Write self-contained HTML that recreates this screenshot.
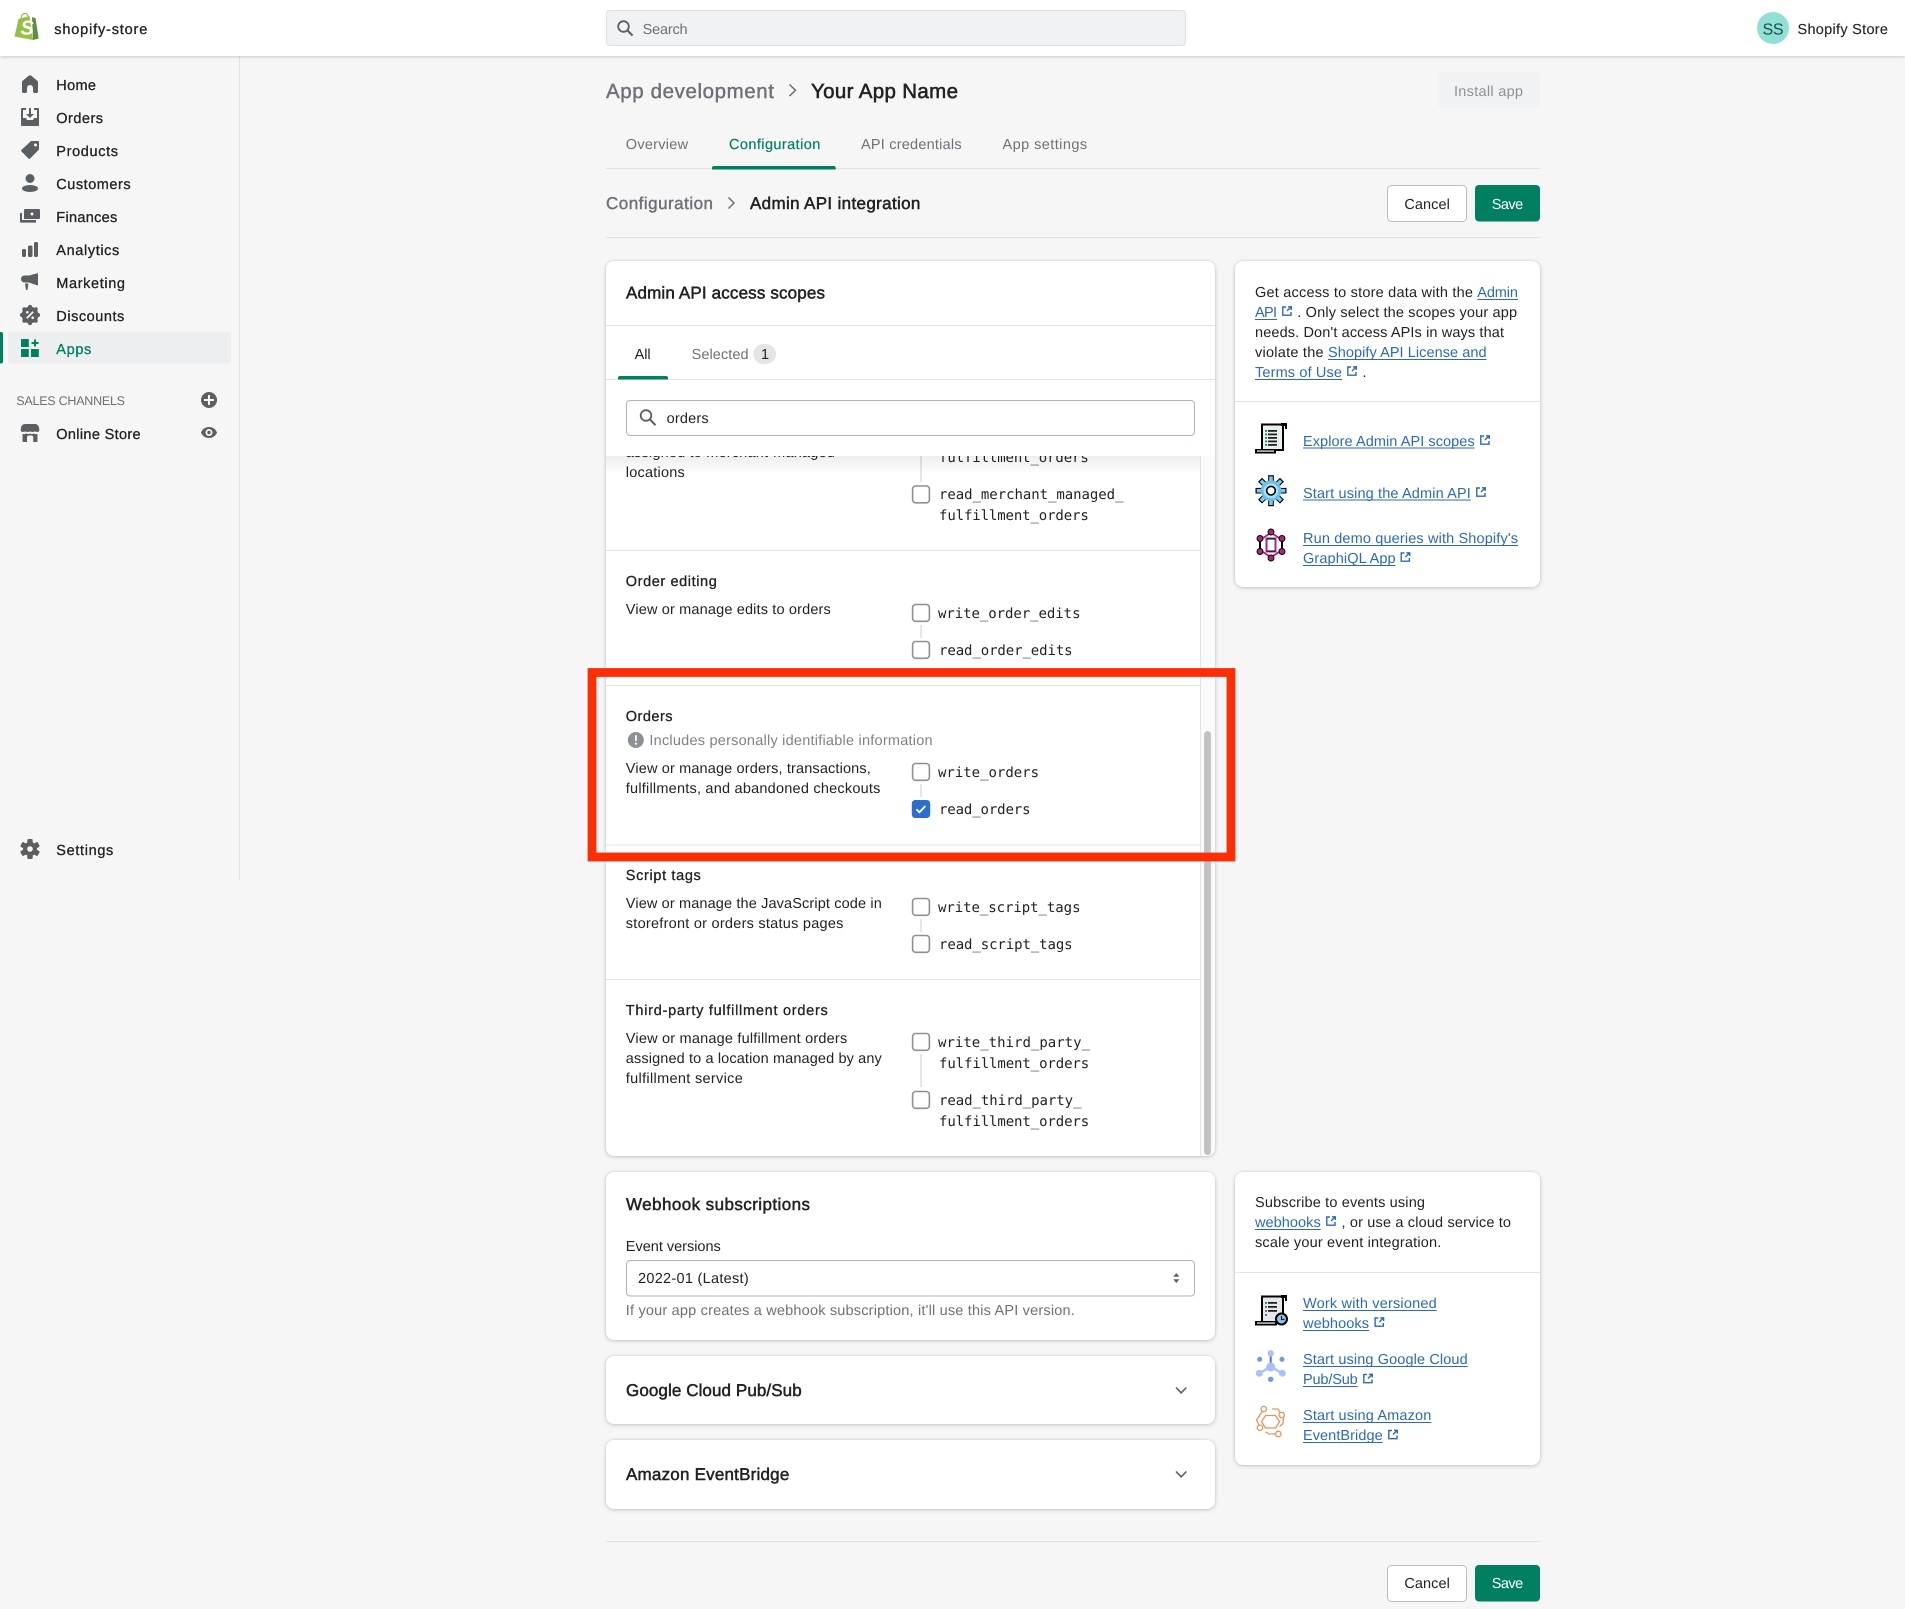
<!DOCTYPE html>
<html lang="en">
<head>
<meta charset="utf-8">
<title>Admin API integration</title>
<style>
html,body{margin:0;padding:0;background:#f6f6f7;overflow:hidden}
svg{display:block}
text{font-family:"Liberation Sans",Arial,sans-serif;font-size:14.5px;fill:#202223;text-rendering:geometricPrecision;white-space:pre}
.m{stroke:#202223;stroke-width:.3}
.s{fill:#6d7175}
.sm{fill:#6d7175;stroke:#6d7175;stroke-width:.42}
.l{fill:#2b69be}
.c{font-family:"DejaVu Sans Mono","Liberation Mono",monospace;font-size:14px}
.h{font-size:17px;stroke:#202223;stroke-width:.5}
.ic{fill:#5c5f62}
.card{fill:#fff;filter:drop-shadow(0 0 1px rgba(23,24,24,.12)) drop-shadow(0 1px 2px rgba(23,24,24,.18))}
.d{stroke:#e1e3e5;stroke-width:1;fill:none}
.u{stroke:#2b69be;stroke-width:1;fill:none}
.cb{fill:#fff;stroke:#8c9196;stroke-width:1.6}
.cn{stroke:#c9cccf;stroke-width:1}
</style>
</head>
<body>
<svg xmlns="http://www.w3.org/2000/svg" width="1905" height="1609" viewBox="0 0 1905 1609">
<defs>
<symbol id="ext" viewBox="0 0 10 10" width="10" height="10" overflow="visible">
<path d="M4 1H.8V9.200H9V6" fill="none" stroke="#2b69be" stroke-width="1.400"/>
<path d="M5 5L9 1M6 .8H9.300V4" fill="none" stroke="#2b69be" stroke-width="1.400"/>
</symbol>
<linearGradient id="sg" x1="0" y1="0" x2="0" y2="1"><stop offset="0" stop-color="#000" stop-opacity=".07"/><stop offset="1" stop-color="#000" stop-opacity="0"/></linearGradient>
</defs>
<rect width="1905" height="1609" fill="#f6f6f7"/>

<!-- sidebar -->
<line x1="239.500" y1="56" x2="239.500" y2="880" class="d"/>
<rect x="8" y="332" width="223" height="31.500" rx="3" fill="#edeef0"/>
<path d="M0 332h1a2 2 0 0 1 2 2v27.500a2 2 0 0 1-2 2H0z" fill="#008060"/>
<g class="ic">
<path transform="translate(20 74)" d="M10 1.200c.4 0 .8.100 1 .3l6 5c.6.400 1 1 1 1.700V17.500c0 .8-.7 1.500-1.500 1.500h-2c-.8 0-1.500-.7-1.500-1.500V14a3 3 0 0 0-6 0v3.500C7 18.300 6.300 19 5.500 19h-2C2.700 19 2 18.300 2 17.500V8.200c0-.7.400-1.300 1-1.700l6-5c.2-.2.600-.3 1-.3z"/>
<path transform="translate(20 107)" d="M2 1h4v2H3v8h3l1 2h6l1-2h3V3h-3V1h4a1 1 0 0 1 1 1v16a1 1 0 0 1-1 1H2a1 1 0 0 1-1-1V2a1 1 0 0 1 1-1zM9 1h2v6h3l-4 4-4-4h3z"/>
<path transform="translate(20 140)" fill-rule="evenodd" d="M11 1h7a1 1 0 0 1 1 1v7.500L10 18.600a1 1 0 0 1-1.400 0L1.400 11.400a1 1 0 0 1 0-1.400zM15.500 3.500a1.500 1.500 0 1 0 0 3 1.500 1.500 0 0 0 0-3z"/>
<g transform="translate(20 173)"><circle cx="10" cy="5.500" r="4.500"/><ellipse cx="10" cy="15.500" rx="8" ry="3.500"/></g>
<g transform="translate(20 206)"><path fill-rule="evenodd" d="M5 3h14a1 1 0 0 1 1 1v8a1 1 0 0 1-1 1H4V4a1 1 0 0 1 1-1zM12 6.500a1.500 1.500 0 1 0 0 3 1.500 1.500 0 0 0 0-3z"/><path d="M0 7h2v7h14v2.600H1a1 1 0 0 1-1-1z"/></g>
<g transform="translate(20 239)"><rect x="2" y="10" width="4" height="8" rx="1.500"/><rect x="8" y="6.500" width="4.500" height="11.500" rx="1.500"/><rect x="14" y="3" width="4" height="15" rx="1.500"/></g>
<path transform="translate(20 272)" d="M18 1.500V13a.5.5 0 0 1-.7.400L9 10.500H4.500a3.500 3.500 0 0 1 0-7H9l8.300-2.300a.5.5 0 0 1 .7.300zM5 11.500h3.500L7.500 18H6z"/>
<g transform="translate(20 305)"><circle cx="10" cy="10" r="8.400"/><g><circle cx="10" cy="1.900" r="2"/><circle cx="10" cy="18.100" r="2"/><circle cx="1.900" cy="10" r="2"/><circle cx="18.100" cy="10" r="2"/><circle cx="4.300" cy="4.300" r="2"/><circle cx="15.700" cy="4.300" r="2"/><circle cx="4.300" cy="15.700" r="2"/><circle cx="15.700" cy="15.700" r="2"/></g><path d="M6.800 13.200l6.400-6.400" stroke="#f6f6f7" stroke-width="1.800"/><circle cx="7.300" cy="7.300" r="1.300" fill="#f6f6f7"/><circle cx="12.700" cy="12.700" r="1.300" fill="#f6f6f7"/></g>
<path transform="translate(20 423)" fill-rule="evenodd" d="M5 1h10c2 0 3.500 1.500 4 3.500l.3 2.700c0 1-.8 1.800-1.800 1.800-.9 0-1.700-.5-2.500-.5s-1.500.5-2.400.5-1.800-.5-2.600-.5-1.500.5-2.400.5-1.600-.5-2.400-.5-1.600.5-2.600.5c-1 0-1.900-.8-1.900-1.800L1 4.500C1.500 2.500 3 1 5 1zM2.500 11c1.500.4 2.700 0 3.700-.5 1.200.7 2.600.7 3.800 0 1.200.7 2.600.7 3.800 0 1 .5 2.200.9 3.700.5v7a1 1 0 0 1-1 1h-3.300v-4.500a2 2 0 0 0-2-2H9a2 2 0 0 0-2 2V19H3.500a1 1 0 0 1-1-1z"/>
<g transform="translate(20 839)"><g><rect x="7.300" y="0" width="5.400" height="20" rx="1.200"/><rect x="7.300" y="0" width="5.400" height="20" rx="1.200" transform="rotate(60 10 10)"/><rect x="7.300" y="0" width="5.400" height="20" rx="1.200" transform="rotate(120 10 10)"/></g><circle cx="10" cy="10" r="7"/><circle cx="10" cy="10" r="2.800" fill="#f6f6f7"/></g>
<circle cx="209" cy="400" r="8"/>
<path fill-rule="evenodd" d="M209 427c4.500 0 7.300 3.300 8 5.500-.7 2.200-3.500 5.500-8 5.500s-7.300-3.300-8-5.500c.7-2.200 3.500-5.500 8-5.500zm0 2a3.500 3.500 0 1 0 0 7 3.500 3.500 0 0 0 0-7z"/>
<circle cx="209" cy="432.500" r="1.700"/>
</g>
<path d="M208 395h2v4h4v2h-4v4h-2v-4h-4v-2h4z" fill="#f6f6f7"/>
<g transform="translate(20 338)" fill="#008060"><rect x="1" y="1" width="7.800" height="8"/><rect x="1" y="11" width="7.800" height="8"/><rect x="11" y="11" width="7.800" height="8"/><rect x="14" y="1.500" width="2" height="7"/><rect x="11.500" y="4" width="7" height="2"/></g>
<text x="56.300" y="90" textLength="39.700" class="m">Home</text>
<text x="56.300" y="123" textLength="46.700" class="m">Orders</text>
<text x="56.300" y="156" textLength="61.700" class="m">Products</text>
<text x="56.300" y="189" textLength="74.300" class="m">Customers</text>
<text x="56.300" y="222" textLength="61" class="m">Finances</text>
<text x="56.300" y="255" textLength="63" class="m">Analytics</text>
<text x="56.300" y="288" textLength="68.700" class="m">Marketing</text>
<text x="56.300" y="321" textLength="68" class="m">Discounts</text>
<text x="56.300" y="354" textLength="35" style="fill:#008060;stroke:#008060;stroke-width:.3">Apps</text>
<text x="16.300" y="405" textLength="108.700" style="font-size:12.500px;fill:#6d7175">SALES CHANNELS</text>
<text x="56.300" y="439" textLength="84.300" class="m">Online Store</text>
<text x="56.300" y="855" textLength="57" class="m">Settings</text>

<!-- top bar -->
<rect x="0" y="0" width="1905" height="56" fill="#fff" style="filter:drop-shadow(0 1px 1.500px rgba(23,24,24,.2))"/>
<path d="M14.500 36.500L18.500 19l11-3 3.500 24z" fill="#95bf47"/>
<path d="M33 40l5.700-1.500L35.500 18l-2-.5-1.500-.5z" fill="#5e8e3e"/>
<path d="M21 19c0-3 1.500-5.500 4-5.500s3.500 2.500 3.500 5" fill="none" stroke="#95bf47" stroke-width="1.200"/>
<text x="20.500" y="34.500" style="font-size:20px;font-weight:bold;font-style:italic;fill:#fff">S</text>
<text x="54.300" y="34" textLength="93" class="m">shopify-store</text>
<rect x="606.500" y="10.500" width="579" height="35" rx="3.500" fill="#f1f2f3" stroke="#dfe1e4"/>
<circle cx="623.500" cy="26.500" r="5.300" fill="none" stroke="#5c5f62" stroke-width="1.800"/>
<path d="M627.500 30.500l5 5" stroke="#5c5f62" stroke-width="2" fill="none"/>
<text x="642.600" y="34" textLength="45" class="s">Search</text>
<circle cx="1773" cy="28" r="16" fill="#91e0d6"/>
<text x="1762.500" y="34.500" textLength="21" style="font-size:16px;fill:#1d4e49">SS</text>
<text x="1797.500" y="34" textLength="90.500" style="stroke:#202223;stroke-width:.12">Shopify Store</text>

<!-- page heading -->
<text x="606" y="98" textLength="168" style="font-size:20.500px" class="sm">App development</text>
<path d="M789.500 84.500l6 5.800-6 5.800" fill="none" stroke="#6d7175" stroke-width="1.500"/>
<text x="811" y="98" textLength="147" style="font-size:20.500px;stroke:#202223;stroke-width:.55">Your App Name</text>
<rect x="1438" y="72" width="102" height="36" rx="4" fill="#f1f2f3"/>
<text x="1454" y="96" textLength="69" style="fill:#8c9196">Install app</text>

<!-- tabs -->
<line x1="606" y1="168.500" x2="1540" y2="168.500" stroke="#dfe1e3"/>
<text x="625.800" y="149" textLength="62.300" class="s">Overview</text>
<text x="729" y="149" textLength="91.300" style="fill:#008060;stroke:#008060;stroke-width:.2">Configuration</text>
<text x="861" y="149" textLength="100.600" class="s">API credentials</text>
<text x="1002.500" y="149" textLength="84.600" class="s">App settings</text>
<path d="M712 169.500v-1.500a2 2 0 0 1 2-2h119.700a2 2 0 0 1 2 2v1.500z" fill="#008060"/>

<!-- sub heading -->
<text x="606" y="209" textLength="107" style="font-size:17px" class="sm">Configuration</text>
<path d="M728.500 197.500l5.500 5.500-5.500 5.500" fill="none" stroke="#6d7175" stroke-width="1.500"/>
<text x="750" y="209" textLength="170.400" class="h">Admin API integration</text>
<rect x="1387.500" y="185.500" width="79" height="36" rx="4" fill="#fff" stroke="#babfc3"/>
<text x="1404.400" y="209" textLength="45.400">Cancel</text>
<rect x="1475" y="185" width="65" height="36.500" rx="4" fill="#008060"/>
<text x="1491.700" y="209" textLength="31.500" style="fill:#fff">Save</text>
<line x1="606" y1="237.500" x2="1540" y2="237.500" stroke="#dfe1e3"/>

<!-- scopes card -->
<rect class="card" x="606" y="261" width="609" height="895" rx="8"/>
<path d="M1200 456h15v692a8 8 0 0 1-8 8h-7z" fill="#fafafa"/>
<line x1="1200.500" y1="456" x2="1200.500" y2="1156" class="d"/>
<rect x="1204.100" y="731" width="6.800" height="424" rx="3.400" fill="#c1c1c1"/>

<text x="625.800" y="457" textLength="209">assigned to merchant-managed</text>
<text x="625.800" y="477" textLength="59">locations</text>
<text x="939" y="461.800" textLength="149.800" class="c">fulfillment_orders</text>
<line x1="921" y1="456" x2="921" y2="482" class="cn"/>
<rect class="cb" x="912.600" y="486" width="16.800" height="16.800" rx="3"/>
<text x="939" y="499" textLength="184.500" class="c">read_merchant_managed_</text>
<text x="939" y="520" textLength="149.800" class="c">fulfillment_orders</text>
<line x1="606" y1="550.500" x2="1200" y2="550.500" class="d"/>

<text x="625.800" y="586" textLength="91" class="m">Order editing</text>
<text x="625.800" y="614" textLength="205">View or manage edits to orders</text>
<rect class="cb" x="912.600" y="604.500" width="16.800" height="16.800" rx="3"/>
<text x="938" y="618" textLength="142.500" class="c">write_order_edits</text>
<line x1="921" y1="625" x2="921" y2="638" class="cn"/>
<rect class="cb" x="912.600" y="641.500" width="16.800" height="16.800" rx="3"/>
<text x="939" y="655" textLength="133.600" class="c">read_order_edits</text>
<line x1="606" y1="685.500" x2="1200" y2="685.500" class="d"/>

<text x="625.800" y="721" textLength="46.700" class="m">Orders</text>
<circle cx="635.800" cy="740" r="8" fill="#8c9196"/>
<rect x="635" y="735" width="1.800" height="6" rx=".8" fill="#fff"/><circle cx="635.900" cy="743.600" r="1.100" fill="#fff"/>
<text x="649.400" y="745" textLength="283.200" style="fill:#7d8287">Includes personally identifiable information</text>
<text x="625.800" y="773" textLength="245">View or manage orders, transactions,</text>
<text x="625.800" y="793" textLength="254.600">fulfillments, and abandoned checkouts</text>
<rect class="cb" x="912.600" y="763.500" width="16.800" height="16.800" rx="3"/>
<text x="938" y="777" textLength="101" class="c">write_orders</text>
<line x1="921" y1="784" x2="921" y2="797" class="cn"/>
<rect x="911.800" y="800" width="18.400" height="18" rx="3.500" fill="#2c6ecb"/>
<path d="M916.400 809.300l3 3 6-6.300" fill="none" stroke="#fff" stroke-width="1.800"/>
<text x="939" y="814" textLength="91.500" class="c">read_orders</text>
<line x1="606" y1="845" x2="1200" y2="845" class="d"/>

<text x="625.800" y="880" textLength="75" class="m">Script tags</text>
<text x="625.800" y="908" textLength="256">View or manage the JavaScript code in</text>
<text x="625.800" y="928" textLength="217.600">storefront or orders status pages</text>
<rect class="cb" x="912.600" y="898.500" width="16.800" height="16.800" rx="3"/>
<text x="938" y="912" textLength="142.500" class="c">write_script_tags</text>
<line x1="921" y1="919" x2="921" y2="932" class="cn"/>
<rect class="cb" x="912.600" y="935.500" width="16.800" height="16.800" rx="3"/>
<text x="939" y="949" textLength="133.600" class="c">read_script_tags</text>
<line x1="606" y1="979.500" x2="1200" y2="979.500" class="d"/>

<text x="625.800" y="1015" textLength="202" class="m">Third-party fulfillment orders</text>
<text x="625.800" y="1043" textLength="221.400">View or manage fulfillment orders</text>
<text x="625.800" y="1063" textLength="256">assigned to a location managed by any</text>
<text x="625.800" y="1083" textLength="117">fulfillment service</text>
<rect class="cb" x="912.600" y="1033.500" width="16.800" height="16.800" rx="3"/>
<text x="938" y="1047" textLength="152" class="c">write_third_party_</text>
<text x="939" y="1068" textLength="150.200" class="c">fulfillment_orders</text>
<line x1="921" y1="1054" x2="921" y2="1087" class="cn"/>
<rect class="cb" x="912.600" y="1091.500" width="16.800" height="16.800" rx="3"/>
<text x="939" y="1105" textLength="142.500" class="c">read_third_party_</text>
<text x="939" y="1126" textLength="150.200" class="c">fulfillment_orders</text>

<rect x="606" y="456" width="594" height="18" fill="url(#sg)"/>
<path d="M606 456V269a8 8 0 0 1 8-8h593a8 8 0 0 1 8 8v187z" fill="#fff"/>
<text x="626" y="298.500" textLength="199" class="h">Admin API access scopes</text>
<line x1="606" y1="325.500" x2="1215" y2="325.500" class="d"/>
<text x="634.600" y="359" textLength="16">All</text>
<text x="691.600" y="359" textLength="57" class="s">Selected</text>
<rect x="753.300" y="344" width="22.700" height="20" rx="10" fill="#e4e5e7"/>
<text x="761" y="359" textLength="7.500">1</text>
<line x1="606" y1="379.500" x2="1215" y2="379.500" class="d"/>
<path d="M618 379.500V378a2 2 0 0 1 2-2h46a2 2 0 0 1 2 2v1.500z" fill="#008060"/>
<rect x="626.500" y="400.500" width="568" height="35" rx="3.500" fill="#fff" stroke="#aeb4b9"/>
<circle cx="646" cy="415.500" r="5.300" fill="none" stroke="#5c5f62" stroke-width="1.800"/>
<path d="M650 419.500l5.500 5.700" stroke="#5c5f62" stroke-width="2" fill="none"/>
<text x="666.600" y="423" textLength="42">orders</text>

<!-- red highlight -->
<rect x="592" y="672.500" width="639" height="184.500" fill="none" stroke="#fd2d05" stroke-width="8.800"/>

<!-- webhook card -->
<rect class="card" x="606" y="1172" width="609" height="168" rx="8"/>
<text x="626" y="1210" textLength="184" class="h">Webhook subscriptions</text>
<text x="625.800" y="1251" textLength="95">Event versions</text>
<rect x="626.500" y="1260.500" width="568" height="35.500" rx="3.500" fill="#fff" stroke="#aeb4b9"/>
<text x="638" y="1283" textLength="110.700">2022-01 (Latest)</text>
<path d="M1176.300 1273l3 3.800h-6zM1176.300 1283l3-3.800h-6z" fill="#5c5f62"/>
<text x="625.800" y="1315" textLength="449" class="s">If your app creates a webhook subscription, it'll use this API version.</text>

<rect class="card" x="606" y="1356" width="609" height="68" rx="8"/>
<text x="626" y="1396" textLength="175.700" class="h">Google Cloud Pub/Sub</text>
<path d="M1176 1387.500l5.200 5.300 5.200-5.300" fill="none" stroke="#5c5f62" stroke-width="1.600"/>
<rect class="card" x="606" y="1440" width="609" height="69" rx="8"/>
<text x="626" y="1480" textLength="163.300" class="h">Amazon EventBridge</text>
<path d="M1176 1471.500l5.200 5.300 5.200-5.300" fill="none" stroke="#5c5f62" stroke-width="1.600"/>

<line x1="606" y1="1541.500" x2="1540" y2="1541.500" stroke="#dfe1e3"/>
<rect x="1387.500" y="1565.500" width="79" height="36" rx="4" fill="#fff" stroke="#babfc3"/>
<text x="1404.400" y="1588" textLength="45.400">Cancel</text>
<rect x="1475" y="1565" width="65" height="36.500" rx="4" fill="#008060"/>
<text x="1491.700" y="1588" textLength="31.500" style="fill:#fff">Save</text>

<!-- side card 1 -->
<rect class="card" x="1235" y="261" width="305" height="326" rx="8"/>
<text x="1255" y="297" textLength="218">Get access to store data with the</text>
<text x="1477.300" y="297" textLength="40.600" class="l">Admin</text><line x1="1477.300" y1="299.500" x2="1518" y2="299.500" class="u"/>
<text x="1255" y="317" textLength="22" class="l">API</text><line x1="1255" y1="319.500" x2="1277" y2="319.500" class="u"/>
<use href="#ext" x="1282" y="306"/>
<text x="1297.300" y="317" textLength="219.800">. Only select the scopes your app</text>
<text x="1255" y="337" textLength="249">needs. Don't access APIs in ways that</text>
<text x="1255" y="357" textLength="68.600">violate the</text>
<text x="1328" y="357" textLength="158.600" class="l">Shopify API License and</text><line x1="1328" y1="359.500" x2="1486.600" y2="359.500" class="u"/>
<text x="1255" y="377" textLength="87" class="l">Terms of Use</text><line x1="1255" y1="379.500" x2="1342" y2="379.500" class="u"/>
<use href="#ext" x="1347" y="366"/>
<text x="1362.500" y="377">.</text>
<line x1="1235" y1="401.500" x2="1540" y2="401.500" class="d"/>

<!-- scroll icon -->
<g transform="translate(1255 422)">
<path d="M7 2.500H28V28H7z" fill="#e9f1ee" stroke="#000" stroke-width="2"/>
<rect x="26" y="1" width="6" height="3" fill="#000"/><rect x="30" y="1" width="2" height="6" fill="#000"/>
<rect x="0" y="27" width="21" height="4.500" fill="#000"/><rect x="2" y="28.200" width="17" height="1.800" fill="#aaa"/>
<g fill="#222"><rect x="13" y="8" width="9" height="1.800"/><rect x="13" y="11.500" width="9" height="1.800"/><rect x="13" y="15" width="9" height="1.800"/><rect x="13" y="18.500" width="9" height="1.800"/><rect x="13" y="22" width="9" height="1.800"/></g>
<g fill="#1a8a6a"><rect x="10" y="8" width="2" height="1.800"/><rect x="10" y="11.500" width="2" height="1.800"/><rect x="10" y="15" width="2" height="1.800"/><rect x="10" y="18.500" width="2" height="1.800"/><rect x="10" y="22" width="2" height="1.800"/></g>
</g>
<!-- gear icon -->
<g transform="translate(1271 490.700)">
<g fill="#000"><rect x="-2.800" y="-15.500" width="5.600" height="31"/><rect x="-2.800" y="-15.500" width="5.600" height="31" transform="rotate(45)"/><rect x="-2.800" y="-15.500" width="5.600" height="31" transform="rotate(90)"/><rect x="-2.800" y="-15.500" width="5.600" height="31" transform="rotate(135)"/></g>
<g fill="#7ccaee"><rect x="-1.800" y="-14.300" width="3.600" height="28.600"/><rect x="-1.800" y="-14.300" width="3.600" height="28.600" transform="rotate(45)"/><rect x="-1.800" y="-14.300" width="3.600" height="28.600" transform="rotate(90)"/><rect x="-1.800" y="-14.300" width="3.600" height="28.600" transform="rotate(135)"/></g>
<circle r="10.300" fill="#6dbde6"/>
<circle r="7.500" fill="#a5def5"/>
<circle r="4.300" fill="#fff" stroke="#000" stroke-width="1.600"/>
</g>
<!-- graphiql icon -->
<g transform="translate(1271 545)">
<path d="M-3-13H3M-11-4V4M11-4V4M-3 13H3" fill="none" stroke="#000" stroke-width="2"/>
<path d="M-2-11L-8-7M2-11L8-7M-2 11L-8 7M2 11L8 7" fill="none" stroke="#a8267c" stroke-width="1.800"/>
<rect x="-4.500" y="-6.500" width="9" height="13" fill="#fff" stroke="#a8267c" stroke-width="2"/>
<path d="M-4-6H4M-4 6H4" stroke="#000" stroke-width="1"/>
<g fill="#a8267c" stroke="#000" stroke-width=".9"><circle cy="-13" r="3"/><circle cy="13" r="3"/><circle cx="-11" cy="-6.500" r="3"/><circle cx="11" cy="-6.500" r="3"/><circle cx="-11" cy="6.500" r="3"/><circle cx="11" cy="6.500" r="3"/></g>
</g>
<text x="1303" y="446" textLength="171.700" class="l">Explore Admin API scopes</text><line x1="1303" y1="448" x2="1474.700" y2="448" class="u"/>
<use href="#ext" x="1480" y="435"/>
<text x="1303" y="498" textLength="167.800" class="l">Start using the Admin API</text><line x1="1303" y1="500" x2="1470.800" y2="500" class="u"/>
<use href="#ext" x="1476" y="487"/>
<text x="1303" y="543" textLength="215" class="l">Run demo queries with Shopify's</text><line x1="1303" y1="545.500" x2="1518" y2="545.500" class="u"/>
<text x="1303" y="563" textLength="92.600" class="l">GraphiQL App</text><line x1="1303" y1="565.500" x2="1395.600" y2="565.500" class="u"/>
<use href="#ext" x="1400.400" y="552"/>

<!-- side card 2 -->
<rect class="card" x="1235" y="1172" width="305" height="293" rx="8"/>
<text x="1255" y="1207" textLength="170">Subscribe to events using</text>
<text x="1255" y="1227" textLength="65.700" class="l">webhooks</text><line x1="1255" y1="1229.500" x2="1320.700" y2="1229.500" class="u"/>
<use href="#ext" x="1326" y="1216"/>
<text x="1341.500" y="1227" textLength="169.500">, or use a cloud service to</text>
<text x="1255" y="1247" textLength="186.300">scale your event integration.</text>
<line x1="1235" y1="1272.500" x2="1540" y2="1272.500" class="d"/>

<!-- versioned scroll icon -->
<g transform="translate(1255 1294)">
<path d="M7 2.500H28V28H7z" fill="#e4e8ea" stroke="#000" stroke-width="2"/>
<rect x="26" y="1" width="6" height="3" fill="#000"/><rect x="30" y="1" width="2" height="6" fill="#000"/>
<rect x="0" y="27" width="22" height="4.500" fill="#000"/><rect x="2" y="28.200" width="18" height="1.800" fill="#aaa"/>
<g fill="#222"><rect x="13" y="8" width="9" height="1.800"/><rect x="13" y="12" width="9" height="1.800"/><rect x="13" y="16" width="9" height="1.800"/></g>
<rect x="10" y="8" width="2" height="1.800" fill="#1a8a6a"/><rect x="10" y="12" width="2" height="1.800" fill="#1a8a6a"/><rect x="10" y="16" width="2" height="1.800" fill="#d33"/><rect x="10" y="20" width="2" height="1.800" fill="#1a8a6a"/>
<circle cx="26.500" cy="25" r="5.500" fill="#8cc6ea" stroke="#000" stroke-width="2"/>
<path d="M26.500 22v3.500h3" fill="none" stroke="#123" stroke-width="1.200"/>
</g>
<!-- pubsub icon -->
<g>
<path d="M1259.300 1373.300l11.400-6.600 11.600 6.600" fill="none" stroke="#a9c1f4" stroke-width="2.500"/>
<line x1="1270.700" y1="1353.300" x2="1270.700" y2="1366" stroke="#3f78e0" stroke-width="2"/>
<circle cx="1270.700" cy="1353.300" r="3.200" fill="#a9c1f4"/>
<circle cx="1259.700" cy="1359.300" r="2.500" fill="#6f98e6"/>
<circle cx="1282" cy="1359.300" r="2.500" fill="#6f98e6"/>
<circle cx="1270.700" cy="1367" r="4.500" fill="#a9c1f4"/>
<circle cx="1259.300" cy="1373.300" r="3.500" fill="#a9c1f4"/>
<circle cx="1282.300" cy="1373.300" r="3.500" fill="#a9c1f4"/>
<circle cx="1270.700" cy="1379.300" r="2.700" fill="#6f98e6"/>
</g>
<!-- eventbridge icon -->
<g fill="none" stroke="#e8935a" stroke-width="1.300">
<path d="M1265.500 1415.500h10l4 6.200-4 6.300h-10l-4-6.300z"/>
<circle cx="1263.700" cy="1409" r="2.700"/>
<circle cx="1281.700" cy="1415" r="2.700"/>
<circle cx="1260" cy="1427.700" r="2.700"/>
<circle cx="1278.300" cy="1434" r="2.700"/>
<path d="M1272 1409h6l2 3.500M1283.500 1417.500l-.5 6-3.500 3M1275.500 1434h-6l-4-2M1259 1425l-2.500-5 6-9"/>
</g>
<text x="1303" y="1308" textLength="133.700" class="l">Work with versioned</text><line x1="1303" y1="1310.500" x2="1436.700" y2="1310.500" class="u"/>
<text x="1303" y="1328" textLength="66" class="l">webhooks</text><line x1="1303" y1="1330.500" x2="1369" y2="1330.500" class="u"/>
<use href="#ext" x="1374.300" y="1317"/>
<text x="1303" y="1364" textLength="164.700" class="l">Start using Google Cloud</text><line x1="1303" y1="1366.500" x2="1467.700" y2="1366.500" class="u"/>
<text x="1303" y="1384" textLength="54.700" class="l">Pub/Sub</text><line x1="1303" y1="1386.500" x2="1357.700" y2="1386.500" class="u"/>
<use href="#ext" x="1363" y="1373.500"/>
<text x="1303" y="1420" textLength="128.300" class="l">Start using Amazon</text><line x1="1303" y1="1422.500" x2="1431.300" y2="1422.500" class="u"/>
<text x="1303" y="1440" textLength="79.700" class="l">EventBridge</text><line x1="1303" y1="1442.500" x2="1382.700" y2="1442.500" class="u"/>
<use href="#ext" x="1388" y="1429.500"/>
</svg>
</body>
</html>
